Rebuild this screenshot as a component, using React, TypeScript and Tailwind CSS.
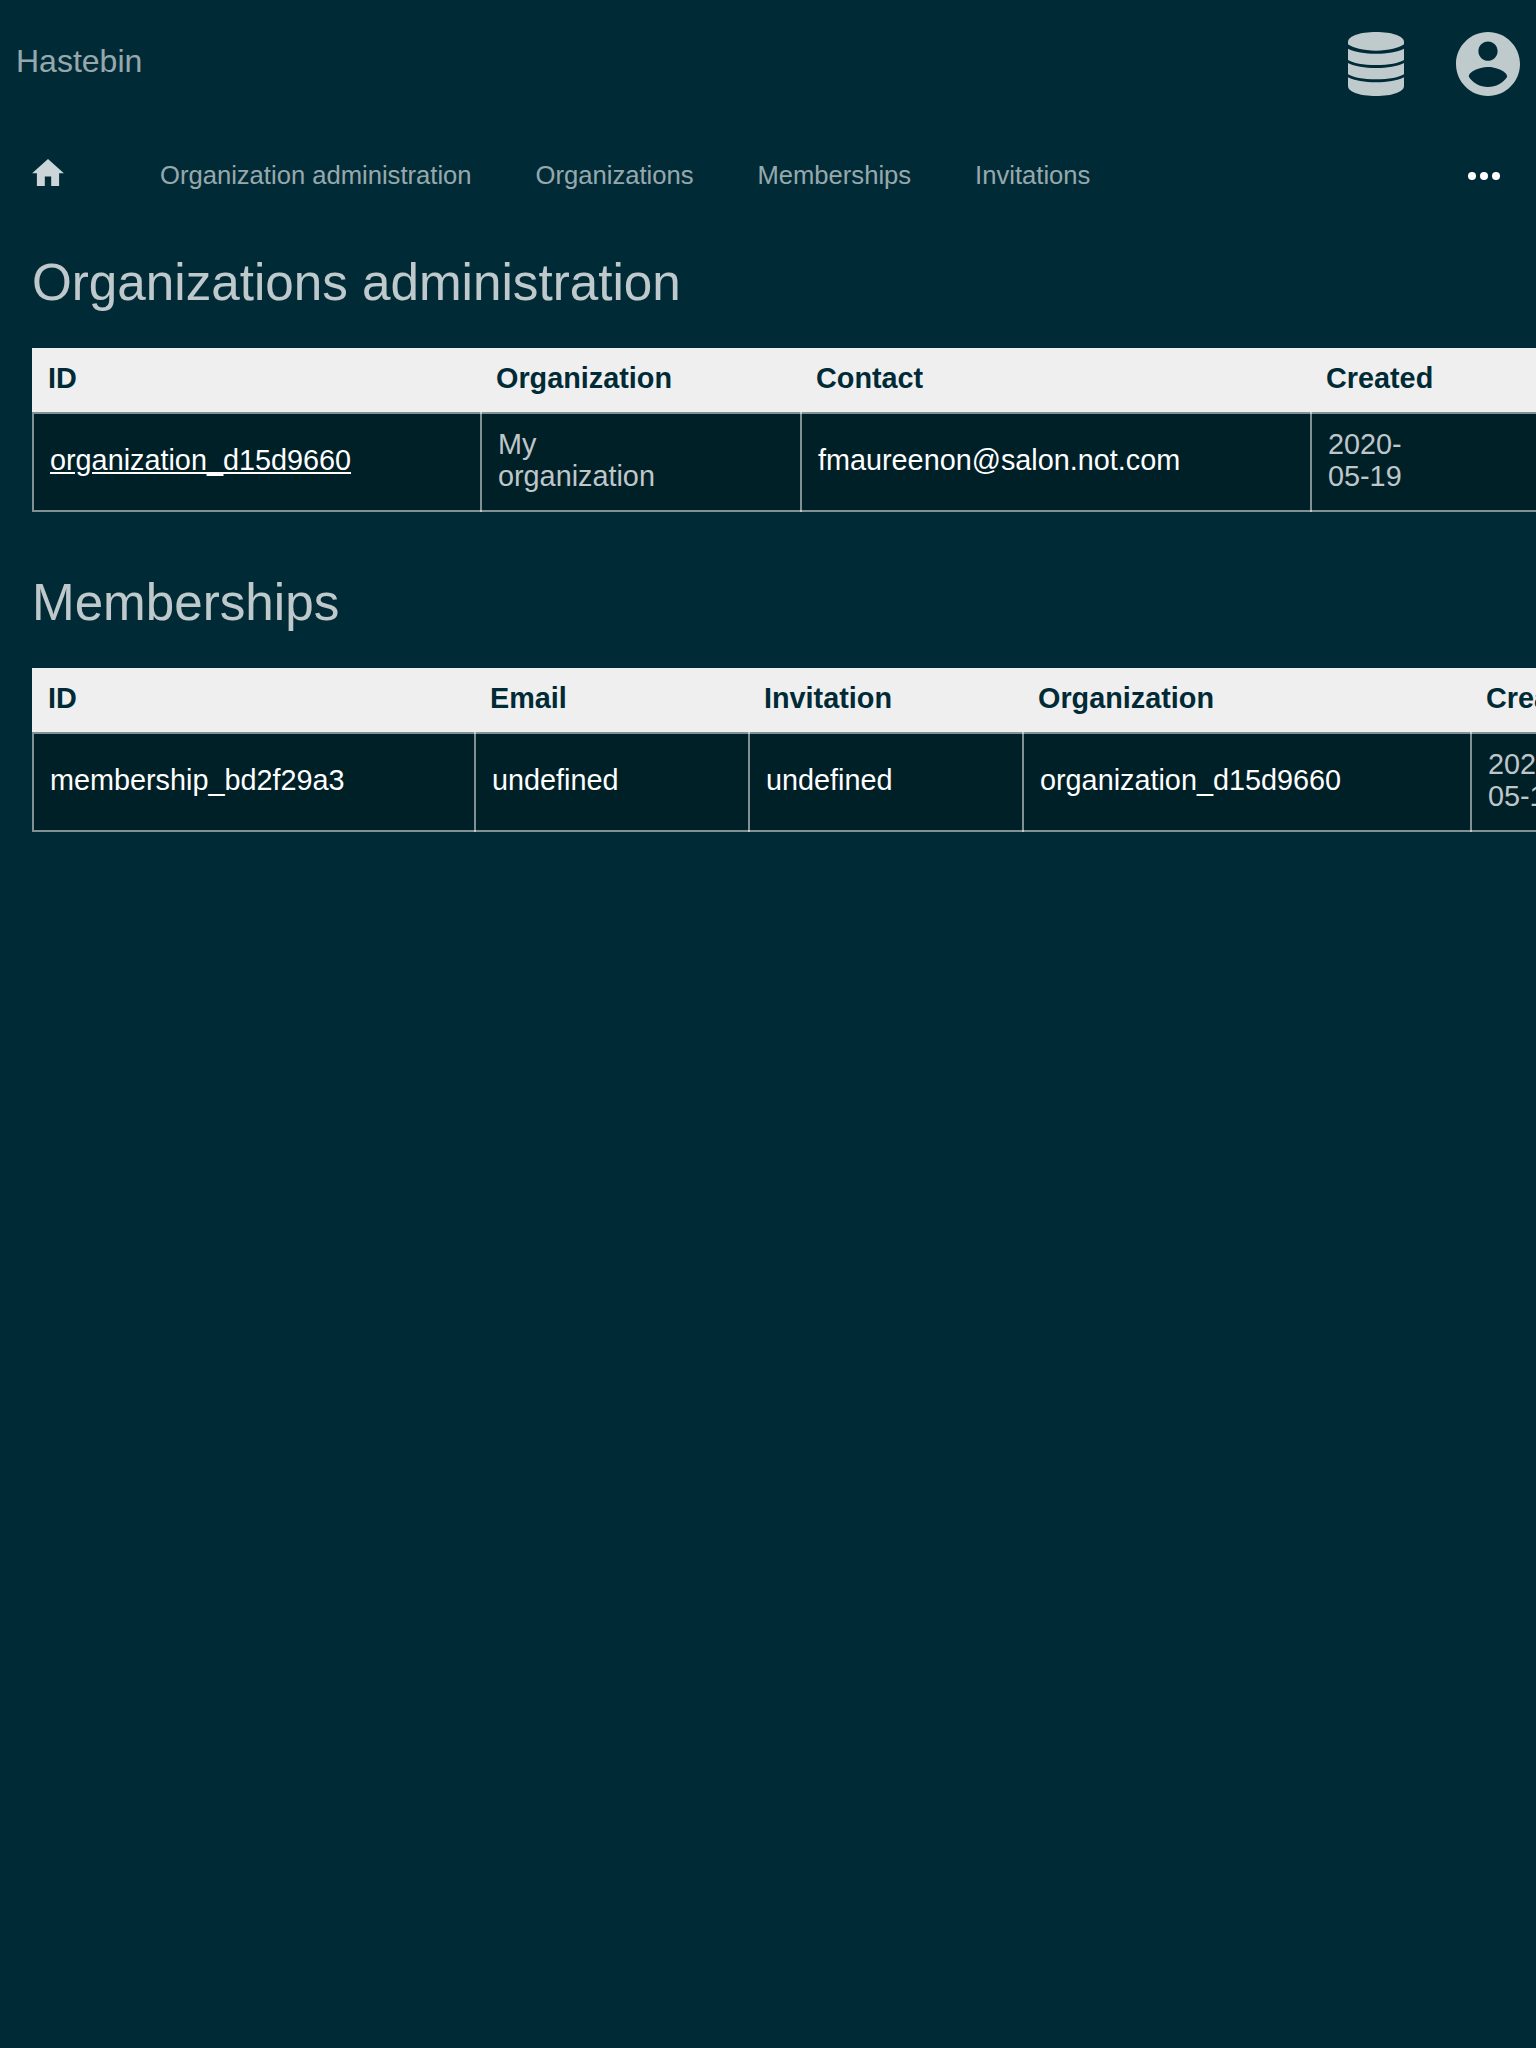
import type { ReactNode } from "react";

type Cell = { head: string; body: ReactNode; muted?: boolean };

function DataTable({ cells, columns }: { cells: Cell[]; columns: string }) {
  return (
    <div role="table" className="text-[28.8px] leading-8">
      <div role="row" className={"grid h-16 items-center bg-[#efefef] pb-[5px] font-bold text-[#002b36] " + columns}>
        {cells.map((c, i) => (
          <span role="columnheader" key={i} className="pl-4">{c.head}</span>
        ))}
      </div>
      <div role="row" className={"grid h-[100px] border-y-2 border-white/50 bg-[#002028] " + columns}>
        {cells.map((c, i) => (
          <div
            role="cell"
            key={i}
            className={
              "-my-0.5 flex items-center border-l-2 border-white/50 pb-[5px] pl-4 first:my-0 " +
              (c.muted ? "text-white/75" : "text-white")
            }
          >
            <div>{c.body}</div>
          </div>
        ))}
      </div>
    </div>
  );
}

const date = (
  <>
    2020-
    <br />
    05-19
  </>
);

const organizations: Cell[] = [
  { head: "ID", body: <a className="underline">organization_d15d9660</a> },
  { head: "Organization", body: <>My<br />organization</>, muted: true },
  { head: "Contact", body: "fmaureenon@salon.not.com" },
  { head: "Created", body: date, muted: true },
];

const memberships: Cell[] = [
  { head: "ID", body: "membership_bd2f29a3" },
  { head: "Email", body: "undefined" },
  { head: "Invitation", body: "undefined" },
  { head: "Organization", body: "organization_d15d9660" },
  { head: "Created", body: date, muted: true },
];

export default function App() {
  return (
    <div className="h-[2048px] w-full overflow-hidden bg-[#002b36] font-['Liberation_Sans',sans-serif]">
      <header className="flex h-32 items-center justify-between px-4">
        <span className="pb-1.5 text-[32px] text-white/60">Hastebin</span>
        <div className="flex items-center gap-[52px] text-[#bfcacd]">
          <svg className="h-16 w-14" viewBox="0 0 168 192" fill="currentColor">
            <path d="M0 30C0 12 36 0 84 0S168 12 168 30V37C154 48 122 56 84 56S14 48 0 37Z" />
            <path d="M0 50C20 60 50 65 84 65S148 60 168 50V84C154 93 122 99 84 99S14 93 0 84Z" />
            <path d="M0 93C20 103 50 108 84 108S148 103 168 93V127C154 136 122 142 84 142S14 136 0 127Z" />
            <path d="M0 136C20 146 50 151 84 151S148 146 168 136V162C168 180 132 192 84 192S0 180 0 162Z" />
          </svg>
          <svg className="size-16" viewBox="2 2 20 20" fill="currentColor">
            <path d="M12 2C6.48 2 2 6.48 2 12s4.48 10 10 10 10-4.48 10-10S17.52 2 12 2zm0 3c1.66 0 3 1.34 3 3s-1.34 3-3 3-3-1.34-3-3 1.34-3 3-3zm0 14.2c-2.500 0-4.710-1.280-6-3.220.03-1.990 4-3.080 6-3.080 1.990 0 5.970 1.090 6 3.080-1.290 1.940-3.500 3.220-6 3.220z" />
          </svg>
        </div>
      </header>
      <nav className="flex h-24 items-center px-8 text-[25.6px] text-white/60">
        <svg className="mr-24 mb-2 h-[27px] w-8" viewBox="2 3 20 17" fill="#ccd5d7">
          <path d="M10 20v-6h4v6h5v-8h3L12 3 2 12h3v8z" />
        </svg>
        <div className="flex gap-16 pb-0.5">
          <a>Organization administration</a>
          <a>Organizations</a>
          <a>Memberships</a>
          <a>Invitations</a>
        </div>
        <div className="ml-auto mr-1 flex gap-1">
          <i className="size-2 rounded-full bg-white" />
          <i className="size-2 rounded-full bg-white" />
          <i className="size-2 rounded-full bg-white" />
        </div>
      </nav>
      <main className="pl-8">
        <h1 className="flex h-[124px] items-center pb-1.5 text-[51.2px] text-white/75">Organizations administration</h1>
        <DataTable cells={organizations} columns="grid-cols-[448px_320px_510px_1fr]" />
        <h1 className="mt-8 flex h-[124px] items-center pb-1.5 text-[51.2px] text-white/75">Memberships</h1>
        <DataTable cells={memberships} columns="grid-cols-[442px_274px_274px_448px_1fr]" />
      </main>
    </div>
  );
}
